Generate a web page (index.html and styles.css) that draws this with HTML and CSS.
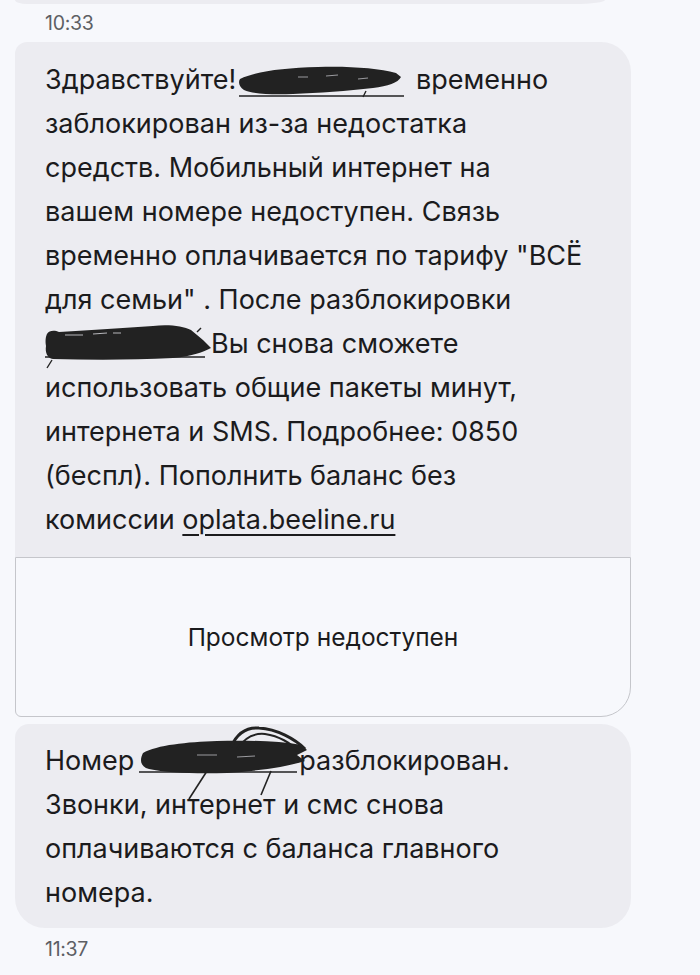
FILE: index.html
```html
<!DOCTYPE html>
<html lang="ru">
<head>
<meta charset="utf-8">
<title>Сообщения</title>
<link rel="stylesheet" href="styles.css">
</head>
<body>
<div class="thread">
  <div class="prev-tail"></div>
  <div class="time">10:33</div>

  <div class="msg msg-first">
    <p class="msg-text">Здравствуйте!<span class="redact r1"><svg viewBox="0 0 166 40" width="166" height="40"><line x1="1" y1="33" x2="166" y2="33" stroke="#222" stroke-width="1.6"/><path d="M2 16 C20 8 45 5 80 4 C110 3 140 5 158 10 L163 14 C160 20 150 23 135 25 C110 28 80 30 55 31 C35 32 15 31 6 27 C1 24 0 19 2 16 Z" fill="#222"/><path d="M60 14 L70 14 M88 13 L100 12 M120 16 L130 15" stroke="#9a9a9e" stroke-width="1.2"/><path d="M128 28 L125 34" stroke="#222" stroke-width="1.4"/></svg></span> временно<br>заблокирован из-за недостатка<br>средств. Мобильный интернет на<br>вашем номере недоступен. Связь<br>временно оплачивается по тарифу "ВСЁ<br>для семьи" . После разблокировки<br><span class="redact r2"><svg viewBox="0 0 172 48" width="172" height="48"><line x1="2" y1="35" x2="162" y2="35" stroke="#222" stroke-width="1.6"/><path d="M4 12 C6 8 12 8 16 10 C50 8 80 6 110 4 C125 2 140 4 148 8 L160 18 L168 26 C160 30 150 34 130 36 C90 38 50 38 10 37 C4 36 2 30 3 24 C2 18 3 14 4 12 Z" fill="#222"/><path d="M22 13 L40 13 M50 12 L64 11 M70 11 L78 11" stroke="#b5b5ba" stroke-width="1.2"/><path d="M154 10 L158 6" stroke="#222" stroke-width="1.4"/><path d="M9 38 L4 46" stroke="#222" stroke-width="1.4"/></svg></span>Вы снова сможете<br>использовать общие пакеты минут,<br>интернета и SMS. Подробнее: 0850<br>(беспл). Пополнить баланс без<br>комиссии <span class="link">oplata.beeline.ru</span></p>
  </div>

  <div class="preview">
    <span class="preview-text">Просмотр недоступен</span>
  </div>

  <div class="msg msg-last">
    <p class="msg-text">Номер<span class="redact r3"><svg viewBox="0 0 176 80" width="176" height="80"><line x1="2" y1="47" x2="160" y2="47" stroke="#222" stroke-width="1.6"/><path d="M6 28 C20 20 50 17 80 16 C110 15 140 16 165 20 L170 25 L160 30 L168 36 C150 42 120 46 90 48 C60 49 30 48 12 44 C4 42 2 36 6 28 Z" fill="#222"/><path d="M94 22 C100 8 110 2 122 3 C140 4 158 14 168 24" stroke="#222" stroke-width="3" fill="none"/><path d="M100 24 C108 12 118 8 128 9 C142 11 154 18 160 26" stroke="#222" stroke-width="2" fill="none"/><path d="M70 46 L52 74" stroke="#222" stroke-width="1.6"/><path d="M134 46 L124 70" stroke="#222" stroke-width="1.6"/><path d="M60 30 L80 30 M100 32 L118 31" stroke="#9a9a9e" stroke-width="1.2"/></svg></span>разблокирован.<br>Звонки, интернет и смс снова<br>оплачиваются с баланса главного<br>номера.</p>
  </div>
  <div class="time time-bottom">11:37</div>
</div>
</body>
</html>
```

FILE: styles.css
```css
* {
  box-sizing: border-box;
}

html, body {
  margin: 0;
  padding: 0;
  background: #f7f8fc;
}

body {
  font-family: Inter, Roboto, "Noto Sans", sans-serif;
  color: #1b1b1d;
}

.thread {
  width: 700px;
  height: 975px;
  overflow: hidden;
  display: flex;
  flex-direction: column;
}

.prev-tail {
  margin-left: 15px;
  width: 590px;
  height: 4px;
  background: #ececf1;
  border-radius: 0 0 30px 12px / 0 0 4px 4px;
}

.time {
  margin: 0 0 0 45px;
  height: 38px;
  font-size: 19.5px;
  line-height: 38px;
  color: #5d5f64;
  letter-spacing: -0.3px;
}

.msg {
  margin-left: 15px;
  width: 616px;
  background: #ececf1;
  padding: 16px 20px 15px 30px;
}

.msg-first {
  border-radius: 12px 30px 0 0;
}

.msg-last {
  margin-top: 7px;
  border-radius: 14px 30px 30px 30px;
  padding-top: 15px;
  padding-bottom: 13px;
}

.msg-text {
  margin: 0;
  font-size: 27px;
  line-height: 44px;
  white-space: nowrap;
}

.redact {
  display: inline-block;
  position: relative;
  height: 27px;
  vertical-align: baseline;
}

.redact svg {
  position: absolute;
  left: 0;
  display: block;
}

.r1 {
  width: 172px;
}

.r1 svg {
  top: 1px;
  left: 2px;
}

.r2 {
  width: 168px;
  margin-left: -2px;
}

.r2 svg {
  top: -4px;
}

.r3 {
  width: 165px;
}

.r3 svg {
  top: -18px;
  left: 3px;
}

.link {
  text-decoration: underline;
  text-decoration-thickness: 1.5px;
  text-underline-offset: 5px;
}

.preview {
  margin-left: 15px;
  width: 616px;
  height: 160px;
  background: #f7f8fc;
  border: 1.5px solid #c5c6cb;
  border-radius: 0 0 30px 6px;
  display: flex;
  align-items: center;
  justify-content: center;
}

.preview-text {
  font-size: 24.5px;
  color: #1b1b1d;
}

.time-bottom {
  margin-top: 2px;
}
```
